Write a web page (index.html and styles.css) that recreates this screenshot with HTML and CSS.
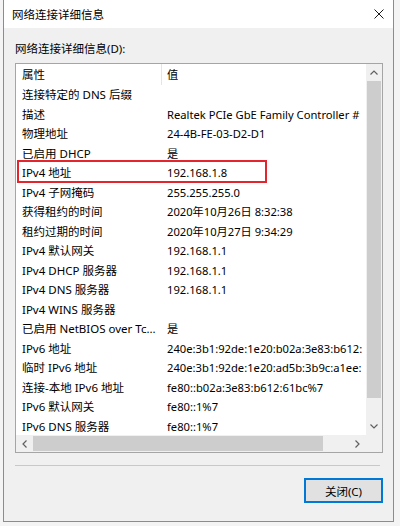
FILE: index.html
```html
<!DOCTYPE html>
<html lang="zh-CN">
<head>
    <meta charset="UTF-8">
    <meta name="viewport" content="width=device-width, initial-scale=1.0">
    <title>网络连接详细信息</title>
    <link rel="stylesheet" href="styles.css">
</head>
<body>

    <div class="window">
        <div class="titlebar">
            <span class="title">网络连接详细信息</span>
            <svg class="close" width="10" height="10" viewBox="0 0 10 10">
                <path d="M0.5 0.5 L9.5 9.5 M9.5 0.5 L0.5 9.5" stroke="#1a1a1a" stroke-width="1" fill="none"/>
            </svg>
        </div>

        <div class="content">
            <div class="label">网络连接详细信息(D):</div>

            <div class="listbox">
                <div class="list">
                    <div class="row head">
                        <div class="prop">属性</div>
                        <div class="val">值</div>
                    </div>
                    <div class="row"><div class="prop">连接特定的 DNS 后缀</div><div class="val"></div></div>
                    <div class="row"><div class="prop">描述</div><div class="val">Realtek PCIe GbE Family Controller #</div></div>
                    <div class="row"><div class="prop">物理地址</div><div class="val">24-4B-FE-03-D2-D1</div></div>
                    <div class="row"><div class="prop">已启用 DHCP</div><div class="val">是</div></div>
                    <div class="row"><div class="prop">IPv4 地址</div><div class="val">192.168.1.8</div></div>
                    <div class="row"><div class="prop">IPv4 子网掩码</div><div class="val">255.255.255.0</div></div>
                    <div class="row"><div class="prop">获得租约的时间</div><div class="val">2020年10月26日 8:32:38</div></div>
                    <div class="row"><div class="prop">租约过期的时间</div><div class="val">2020年10月27日 9:34:29</div></div>
                    <div class="row"><div class="prop">IPv4 默认网关</div><div class="val">192.168.1.1</div></div>
                    <div class="row"><div class="prop">IPv4 DHCP 服务器</div><div class="val">192.168.1.1</div></div>
                    <div class="row"><div class="prop">IPv4 DNS 服务器</div><div class="val">192.168.1.1</div></div>
                    <div class="row"><div class="prop">IPv4 WINS 服务器</div><div class="val"></div></div>
                    <div class="row"><div class="prop">已启用 NetBIOS over Tc...</div><div class="val">是</div></div>
                    <div class="row"><div class="prop">IPv6 地址</div><div class="val">240e:3b1:92de:1e20:b02a:3e83:b612:</div></div>
                    <div class="row"><div class="prop">临时 IPv6 地址</div><div class="val">240e:3b1:92de:1e20:ad5b:3b9c:a1ee:</div></div>
                    <div class="row"><div class="prop">连接-本地 IPv6 地址</div><div class="val">fe80::b02a:3e83:b612:61bc%7</div></div>
                    <div class="row"><div class="prop">IPv6 默认网关</div><div class="val">fe80::1%7</div></div>
                    <div class="row"><div class="prop">IPv6 DNS 服务器</div><div class="val">fe80::1%7</div></div>

                    <!-- highlight drawn over the IPv4 row -->
                    <div class="mark"></div>
                </div>

                <div class="vscroll">
                    <svg class="arrow" width="8" height="5" viewBox="0 0 8 5"><path d="M0.5 4.5 L4 1 L7.5 4.5" stroke="#606060" stroke-width="1.2" fill="none"/></svg>
                    <div class="vthumb"></div>
                    <div class="vtrack"></div>
                    <svg class="arrow" width="8" height="5" viewBox="0 0 8 5"><path d="M0.5 0.5 L4 4 L7.5 0.5" stroke="#606060" stroke-width="1.2" fill="none"/></svg>
                </div>

                <div class="hscroll">
                    <svg class="arrow" width="5" height="8" viewBox="0 0 5 8"><path d="M4.5 0.5 L1 4 L4.5 7.5" stroke="#606060" stroke-width="1.2" fill="none"/></svg>
                    <div class="hthumb"></div>
                    <div class="htrack"></div>
                    <svg class="arrow" width="5" height="8" viewBox="0 0 5 8"><path d="M0.5 0.5 L4 4 L0.5 7.5" stroke="#606060" stroke-width="1.2" fill="none"/></svg>
                </div>

                <div class="corner"></div>
            </div>

            <div class="separator"></div>

            <div class="buttons">
                <button class="btn">关闭(C)</button>
            </div>
        </div>
    </div>

</body>
</html>
```

FILE: styles.css
```css
body {
    margin: 0;
    padding: 0 0 0 3px;
    background-color: #f4f4f4;
    font-family: "Noto Sans", "Noto Sans CJK SC", sans-serif;
    font-size: 11.5px;
    color: #000;
}

.window {
    width: 389px;
    height: 521px;
    border: 1px solid #8c8c8c;
    border-top: none;
    background: #f0f0f0;
    display: flex;
    flex-direction: column;
}

.titlebar {
    height: 28px;
    background: #ffffff;
    display: flex;
    align-items: center;
    justify-content: space-between;
    padding: 0 9px 0 8px;
}
.title {
    font-size: 11.5px;
    color: #000;
}
.close {
    display: block;
}

.content {
    flex: 1;
    padding: 11px 10px 0 11px;
    display: flex;
    flex-direction: column;
}

.label {
    height: 24px;
    line-height: 20px;
}

.listbox {
    height: 388px;
    border: 1px solid #a5a5a5;
    background: #ffffff;
    display: grid;
    grid-template-columns: 1fr 16px;
    grid-template-rows: 1fr 17px;
}

.list {
    position: relative;
    overflow: hidden;
}

.row {
    display: grid;
    grid-template-columns: 145px 1fr;
    height: 19.5px;
    line-height: 19.5px;
    white-space: nowrap;
}
.row.head {
    height: 21px;
    line-height: 21px;
}
.row.head .val {
    border-left: 1px solid #e5e5e5;
    padding-left: 5px;
}
.prop {
    padding-left: 6px;
    overflow: hidden;
    padding-right: 4px;
}
.val {
    padding-left: 6px;
    overflow: hidden;
    font-size: 11.2px;
}

.mark {
    position: absolute;
    left: 1px;
    top: 96px;
    width: 246px;
    height: 19px;
    border: 2px solid #e3262d;
}

.vscroll {
    background: #f0f0f0;
    display: flex;
    flex-direction: column;
    align-items: center;
}
.vscroll .arrow {
    margin: 6px 0;
}
.vthumb {
    width: 14px;
    height: 317px;
    background: #cdcdcd;
}
.vtrack {
    flex: 1;
}

.hscroll {
    background: #f0f0f0;
    display: flex;
    align-items: center;
}
.hscroll .arrow {
    margin: 0 6px;
}
.hthumb {
    width: 290px;
    height: 15px;
    background: #cdcdcd;
}
.htrack {
    flex: 1;
}

.corner {
    background: #f0f0f0;
}

.separator {
    height: 1px;
    background: #c8c8c8;
    margin: 12px 3px 0 0;
}

.buttons {
    display: flex;
    justify-content: flex-end;
    padding-top: 12px;
}
.btn {
    width: 79px;
    height: 25px;
    border: 2px solid #0078d7;
    background: #e1e1e1;
    font-family: "Noto Sans", "Noto Sans CJK SC", sans-serif;
    font-size: 11.5px;
    color: #000;
    padding: 0;
}
```
